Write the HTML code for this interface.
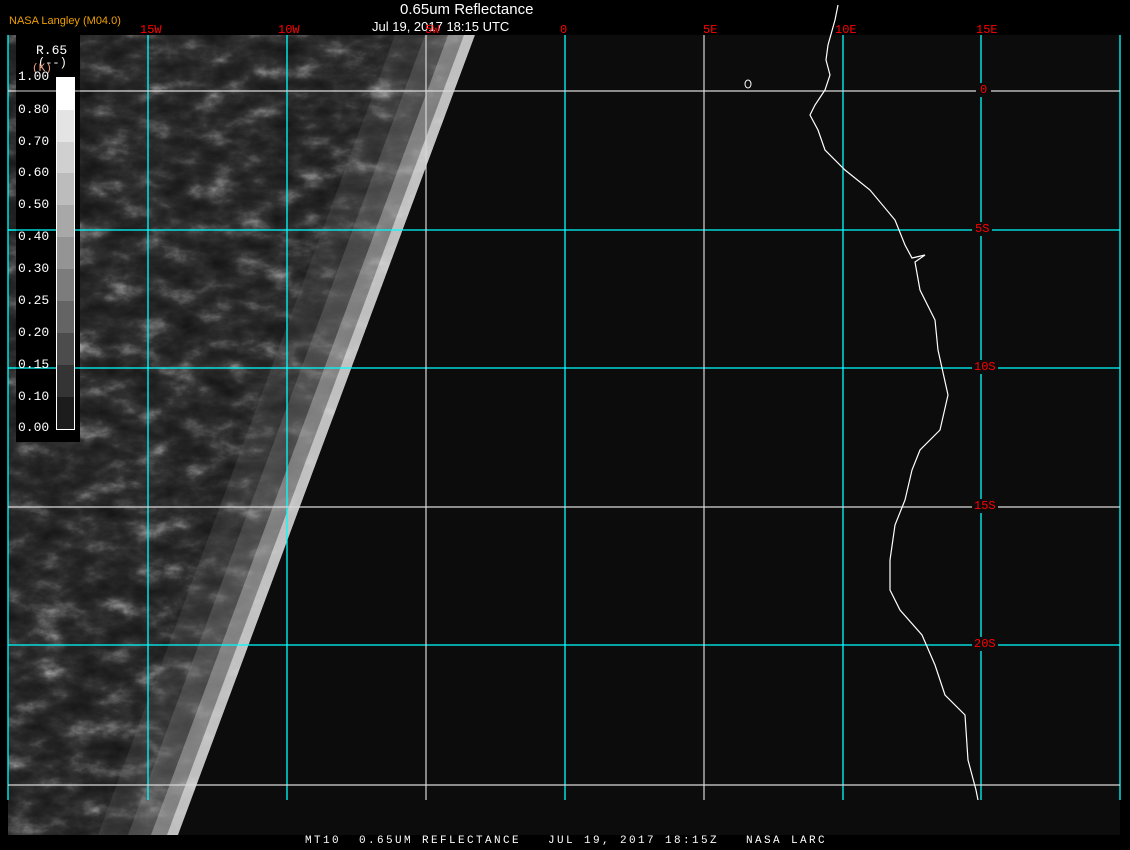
<!DOCTYPE html>
<html><head><style>
body{margin:0;background:#000;width:1130px;height:850px;overflow:hidden;position:relative;font-family:"Liberation Mono",monospace}
.t{position:absolute;white-space:nowrap}
.r{color:#f00;font-size:12px}
.w{color:#fff;font-size:13px}
</style></head><body>
<svg width="1130" height="850" style="position:absolute;left:0;top:0">
<defs>
<filter id="n" x="0" y="0" width="100%" height="100%" color-interpolation-filters="sRGB">
<feTurbulence type="fractalNoise" baseFrequency="0.03 0.05" numOctaves="5" seed="11"/>
<feColorMatrix type="matrix" values="1 0 0 0 0  1 0 0 0 0  1 0 0 0 0  0 0 0 0 1"/>
<feComponentTransfer>
<feFuncR type="table" tableValues="0.07 0.09 0.12 0.15 0.2 0.32 0.5 0.75"/>
<feFuncG type="table" tableValues="0.07 0.09 0.12 0.15 0.2 0.32 0.5 0.75"/>
<feFuncB type="table" tableValues="0.07 0.09 0.12 0.15 0.2 0.32 0.5 0.75"/>
</feComponentTransfer>
</filter>
<clipPath id="c"><polygon points="8,35 475,35 178,835 8,835"/></clipPath>
</defs>
<rect x="8" y="35" width="1112" height="800" fill="#0c0c0c"/>
<g clip-path="url(#c)">
<rect x="8" y="35" width="470" height="800" filter="url(#n)"/>
<polygon points="395,35 475,35 178,835 98,835" fill="#777" opacity="0.2"/>
<polygon points="425,35 475,35 178,835 128,835" fill="#999" opacity="0.25"/>
<polygon points="448,35 475,35 178,835 151,835" fill="#ccc" opacity="0.4"/>
<polygon points="464,35 475,35 178,835 167,835" fill="#fff" opacity="0.5"/>
</g>
<g stroke="#00ffff" stroke-width="1.3">
<line x1="8" y1="35" x2="8" y2="800"/><line x1="148" y1="35" x2="148" y2="800"/><line x1="287" y1="35" x2="287" y2="800"/>
<line x1="565" y1="35" x2="565" y2="800"/><line x1="843" y1="35" x2="843" y2="800"/><line x1="981" y1="35" x2="981" y2="800"/><line x1="1120" y1="35" x2="1120" y2="800"/>
<line x1="8" y1="230" x2="1120" y2="230"/><line x1="8" y1="368" x2="1120" y2="368"/><line x1="8" y1="645" x2="1120" y2="645"/>
</g>
<g stroke="#d8d8d8" stroke-width="1.2">
<line x1="426" y1="35" x2="426" y2="800"/><line x1="704" y1="35" x2="704" y2="800"/>
<line x1="8" y1="91" x2="1120" y2="91"/><line x1="8" y1="507" x2="1120" y2="507"/><line x1="8" y1="785" x2="1120" y2="785"/>
</g>
<polyline fill="none" stroke="#fff" stroke-width="1.2" points="838,5 835,20 828,45 826,60 830,75 825,90 815,105 810,115 818,130 825,150 845,170 870,190 895,220 905,245 912,258 925,255 915,262 920,290 935,320 938,350 948,395 940,430 920,450 912,470 905,500 895,525 890,560 890,590 900,610 922,635 935,665 945,695 965,715 968,760 976,790 978,800"/>
<ellipse cx="748" cy="84" rx="3" ry="4" fill="none" stroke="#fff"/>
<rect x="16" y="35" width="64" height="407" fill="#000"/>
<line x1="8" y1="91" x2="80" y2="91" stroke="#d8d8d8"/>
<line x1="8" y1="230" x2="80" y2="230" stroke="#00ffff" stroke-width="1.3"/>
<line x1="8" y1="368" x2="80" y2="368" stroke="#00ffff" stroke-width="1.3"/>
<g stroke="none">
<rect x="56" y="77" width="19" height="33" fill="#fff"/>
<rect x="56" y="110" width="19" height="32" fill="#e4e4e4"/>
<rect x="56" y="142" width="19" height="31" fill="#d0d0d0"/>
<rect x="56" y="173" width="19" height="32" fill="#bcbcbc"/>
<rect x="56" y="205" width="19" height="32" fill="#a8a8a8"/>
<rect x="56" y="237" width="19" height="32" fill="#949494"/>
<rect x="56" y="269" width="19" height="32" fill="#7c7c7c"/>
<rect x="56" y="301" width="19" height="32" fill="#646464"/>
<rect x="56" y="333" width="19" height="32" fill="#4c4c4c"/>
<rect x="56" y="365" width="19" height="32" fill="#343434"/>
<rect x="56" y="397" width="19" height="33" fill="#1c1c1c"/>
</g>
<rect x="56.5" y="77.5" width="18" height="352" fill="none" stroke="#fff"/>
</svg>
<div class="t" style="left:9px;top:15px;color:#f0a000;font-family:'Liberation Sans',sans-serif;font-size:11px">NASA Langley (M04.0)</div>
<div class="t" style="left:400px;top:1px;color:#fff;font-family:'Liberation Sans',sans-serif;font-size:15px">0.65um Reflectance</div>
<div class="t" style="left:372px;top:19px;color:#fff;font-family:'Liberation Sans',sans-serif;font-size:13px">Jul 19, 2017 18:15 UTC</div>
<div class="t r" style="left:140px;top:23px">15W</div>
<div class="t r" style="left:278px;top:23px">10W</div>
<div class="t r" style="left:425px;top:23px">5W</div>
<div class="t r" style="left:560px;top:23px">0</div>
<div class="t r" style="left:703px;top:23px">5E</div>
<div class="t r" style="left:835px;top:23px">10E</div>
<div class="t r" style="left:976px;top:23px">15E</div>
<div class="t r" style="left:976px;top:83px;background:#0c0c0c;padding:0 4px">0</div>
<div class="t r" style="left:972px;top:222px;background:#0c0c0c;padding:0 3px">5S</div>
<div class="t r" style="left:972px;top:360px;background:#0c0c0c;padding:0 2px">10S</div>
<div class="t r" style="left:972px;top:499px;background:#0c0c0c;padding:0 2px">15S</div>
<div class="t r" style="left:972px;top:637px;background:#0c0c0c;padding:0 2px">20S</div>
<div class="t w" style="left:36px;top:43px">R.65</div>
<div class="t w" style="left:38px;top:56px;font-size:12px">(--)</div>
<div class="t" style="left:32px;top:63px;color:#f0a080;font-size:11px">(K)</div>
<div class="t w" style="left:18px;top:69px">1.00</div>
<div class="t w" style="left:18px;top:102px">0.80</div>
<div class="t w" style="left:18px;top:134px">0.70</div>
<div class="t w" style="left:18px;top:165px">0.60</div>
<div class="t w" style="left:18px;top:197px">0.50</div>
<div class="t w" style="left:18px;top:229px">0.40</div>
<div class="t w" style="left:18px;top:261px">0.30</div>
<div class="t w" style="left:18px;top:293px">0.25</div>
<div class="t w" style="left:18px;top:325px">0.20</div>
<div class="t w" style="left:18px;top:357px">0.15</div>
<div class="t w" style="left:18px;top:389px">0.10</div>
<div class="t w" style="left:18px;top:420px">0.00</div>
<div class="t w" style="left:305px;top:835px;font-size:11px;letter-spacing:2.4px;white-space:pre">MT10  0.65UM REFLECTANCE   JUL 19, 2017 18:15Z   NASA LARC</div>
</body></html>
